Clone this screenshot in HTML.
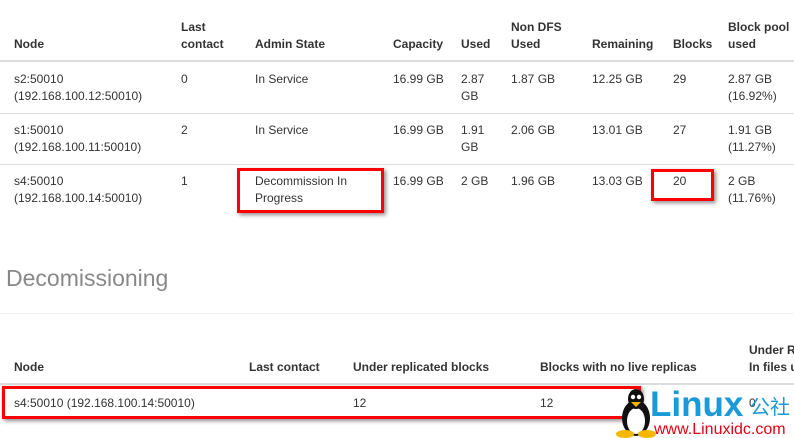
<!DOCTYPE html>
<html><head><style>
body{margin:0;width:794px;height:438px;overflow:hidden;background:#fff;font-family:"Liberation Sans","Noto Sans CJK SC",sans-serif;font-size:12px;color:#333;position:relative}
.t{position:absolute;line-height:17px;white-space:nowrap}
.b{font-weight:bold}
.l{position:absolute;left:0;width:794px;height:1px;background:#ddd}
.r{position:absolute;border:3px solid #f00;box-shadow:2px 2px 4px rgba(0,0,0,.45)}
</style></head><body>
<div class="t b" style="left:14px;top:36px">Node</div>
<div class="t b" style="left:181px;top:19px">Last<br>contact</div>
<div class="t b" style="left:255px;top:36px">Admin State</div>
<div class="t b" style="left:393px;top:36px">Capacity</div>
<div class="t b" style="left:461px;top:36px">Used</div>
<div class="t b" style="left:511px;top:19px">Non DFS<br>Used</div>
<div class="t b" style="left:592px;top:36px">Remaining</div>
<div class="t b" style="left:673px;top:36px">Blocks</div>
<div class="t b" style="left:728px;top:19px">Block pool<br>used</div>
<div class="l" style="top:60px;height:2px"></div>

<div class="t" style="left:14px;top:71px">s2:50010<br>(192.168.100.12:50010)</div>
<div class="t" style="left:181px;top:71px">0</div>
<div class="t" style="left:255px;top:71px">In Service</div>
<div class="t" style="left:393px;top:71px">16.99 GB</div>
<div class="t" style="left:461px;top:71px">2.87<br>GB</div>
<div class="t" style="left:511px;top:71px">1.87 GB</div>
<div class="t" style="left:592px;top:71px">12.25 GB</div>
<div class="t" style="left:673px;top:71px">29</div>
<div class="t" style="left:728px;top:71px">2.87 GB<br>(16.92%)</div>
<div class="l" style="top:113px"></div>

<div class="t" style="left:14px;top:122px">s1:50010<br>(192.168.100.11:50010)</div>
<div class="t" style="left:181px;top:122px">2</div>
<div class="t" style="left:255px;top:122px">In Service</div>
<div class="t" style="left:393px;top:122px">16.99 GB</div>
<div class="t" style="left:461px;top:122px">1.91<br>GB</div>
<div class="t" style="left:511px;top:122px">2.06 GB</div>
<div class="t" style="left:592px;top:122px">13.01 GB</div>
<div class="t" style="left:673px;top:122px">27</div>
<div class="t" style="left:728px;top:122px">1.91 GB<br>(11.27%)</div>
<div class="l" style="top:164px"></div>

<div class="t" style="left:14px;top:173px">s4:50010<br>(192.168.100.14:50010)</div>
<div class="t" style="left:181px;top:173px">1</div>
<div class="t" style="left:255px;top:173px">Decommission In<br>Progress</div>
<div class="t" style="left:393px;top:173px">16.99 GB</div>
<div class="t" style="left:461px;top:173px">2 GB</div>
<div class="t" style="left:511px;top:173px">1.96 GB</div>
<div class="t" style="left:592px;top:173px">13.03 GB</div>
<div class="t" style="left:673px;top:173px">20</div>
<div class="t" style="left:728px;top:173px">2 GB<br>(11.76%)</div>
<div class="r" style="left:237px;top:168px;width:141px;height:39px"></div>
<div class="r" style="left:651px;top:169px;width:57px;height:26px"></div>

<div class="t" style="left:6px;top:264px;font-size:23px;line-height:28px;color:#888">Decomissioning</div>
<div class="l" style="top:313px;background:#eee"></div>

<div class="t b" style="left:14px;top:359px">Node</div>
<div class="t b" style="left:249px;top:359px">Last contact</div>
<div class="t b" style="left:353px;top:359px">Under replicated blocks</div>
<div class="t b" style="left:540px;top:359px">Blocks with no live replicas</div>
<div class="t b" style="left:749px;top:342px">Under R<br>In files u</div>
<div class="l" style="top:383px;height:2px"></div>
<div class="t" style="left:14px;top:395px">s4:50010 (192.168.100.14:50010)</div>
<div class="t" style="left:353px;top:395px">12</div>
<div class="t" style="left:540px;top:395px">12</div>
<div class="t" style="left:749px;top:395px">0</div>
<div class="r" style="left:2px;top:386px;width:633px;height:27px"></div>

<svg style="position:absolute;left:614px;top:388px" width="52" height="50" viewBox="0 0 52 50">
<ellipse cx="22" cy="30" rx="14" ry="18" fill="#111"/>
<ellipse cx="22" cy="33" rx="9" ry="13" fill="#fff"/>
<ellipse cx="22" cy="11" rx="8" ry="10" fill="#111"/>
<circle cx="19" cy="9" r="2.2" fill="#fff"/><circle cx="25" cy="9" r="2.2" fill="#fff"/>
<path d="M17 14 L27 14 L22 19Z" fill="#f5b800"/>
<ellipse cx="11" cy="46" rx="9" ry="4" fill="#f5b800"/>
<ellipse cx="33" cy="46" rx="9" ry="4" fill="#f5b800"/>
</svg>
<div class="t" style="left:650px;top:388px;font-size:35px;line-height:34px;font-weight:bold;color:#1a9ad6;letter-spacing:0px">Linux</div>
<div class="t" style="left:750px;top:397px;font-size:20px;line-height:22px;color:#1a9ad6">公社</div>
<div class="t" style="left:654px;top:421px;font-size:16px;line-height:17px;color:#e60012">www.Linuxidc.com</div>
</body></html>
